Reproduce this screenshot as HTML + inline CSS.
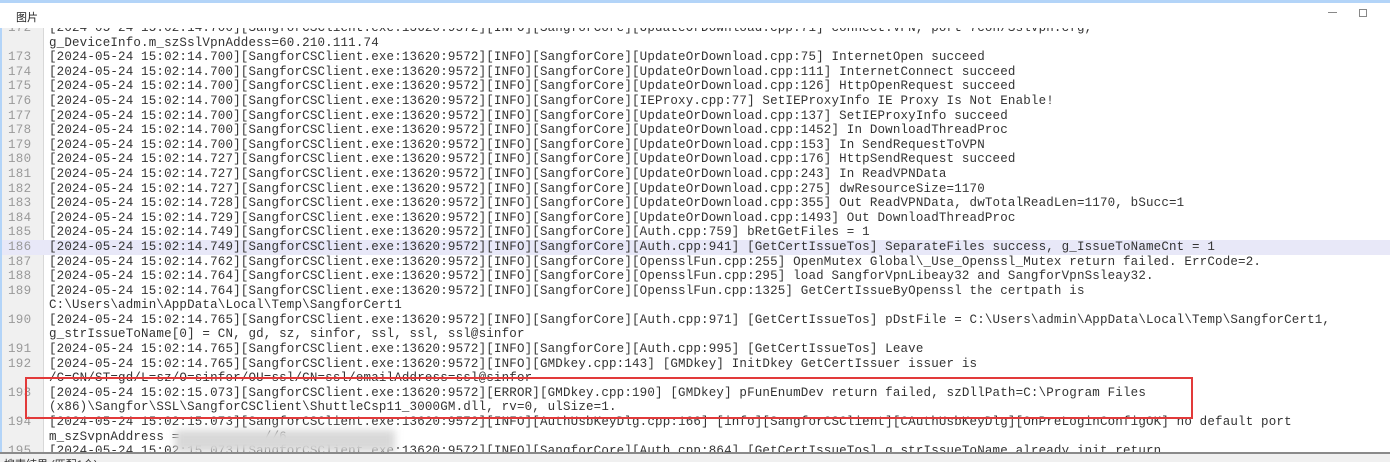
<!DOCTYPE html>
<html><head><meta charset="utf-8"><style>
*{margin:0;padding:0;box-sizing:border-box}
body{width:1390px;height:462px;overflow:hidden;background:#fff;position:relative;font-family:"Liberation Sans","Noto Sans CJK SC",sans-serif}
.top{position:absolute;left:0;top:0;width:1390px;height:3px;background:#b3d4f8}
.title{position:absolute;left:16px;top:9px;font-size:11px;color:#222}
.min{position:absolute;left:1328px;top:12px;width:9px;height:1px;background:#888}
.max{position:absolute;left:1359px;top:9px;width:8px;height:8px;border:1px solid #888}
.edit{position:absolute;left:0;top:28px;width:1390px;height:424px;overflow:hidden;border-left:2px solid #b3d4f8}
.gut{position:absolute;left:0;top:0;width:42px;height:424px;background:#f0f0f0;border-right:1px solid #d8d8d8}
.lines{position:absolute;left:0;top:-7px;width:1390px;font-family:"Liberation Mono",monospace;font-size:12.5px;line-height:14.6px;color:#333}
.r{height:14.6px;white-space:pre;position:relative}
.n{position:absolute;left:6px;color:#999;letter-spacing:0.3px}
.t{position:absolute;left:47px;letter-spacing:0.17px}
.hl{background:#e8e8f8}
.box{position:absolute;left:25px;top:377px;width:1168px;height:42px;border:2px solid #e23a3a}
.blur{position:absolute;left:175px;top:430px;width:220px;height:22px;background:#d8d8d8;filter:blur(4px)}
.bline{position:absolute;left:0;top:452px;width:1390px;height:2px;background:#8a8a8a}
.status{position:absolute;left:0;top:454px;width:1390px;height:8px;background:#f0f0f0;font-size:11px;color:#333;overflow:hidden}
.status span{position:absolute;left:4px;top:2px}
</style></head><body>
<div class="top"></div>
<div class="title">图片</div>
<div class="min"></div><div class="max"></div>
<div class="edit">
<div class="gut"></div>
<div class="lines">
<div class="r"><span class="n">172</span><span class="t">[2024-05-24 15:02:14.700][SangforCSClient.exe:13620:9572][INFO][SangforCore][UpdateOrDownload.cpp:71] connect:VPN, port 7con/Sslvpn.cfg,</span></div>
<div class="r"><span class="t">g_DeviceInfo.m_szSslVpnAddess=60.210.111.74</span></div>
<div class="r"><span class="n">173</span><span class="t">[2024-05-24 15:02:14.700][SangforCSClient.exe:13620:9572][INFO][SangforCore][UpdateOrDownload.cpp:75] InternetOpen succeed</span></div>
<div class="r"><span class="n">174</span><span class="t">[2024-05-24 15:02:14.700][SangforCSClient.exe:13620:9572][INFO][SangforCore][UpdateOrDownload.cpp:111] InternetConnect succeed</span></div>
<div class="r"><span class="n">175</span><span class="t">[2024-05-24 15:02:14.700][SangforCSClient.exe:13620:9572][INFO][SangforCore][UpdateOrDownload.cpp:126] HttpOpenRequest succeed</span></div>
<div class="r"><span class="n">176</span><span class="t">[2024-05-24 15:02:14.700][SangforCSClient.exe:13620:9572][INFO][SangforCore][IEProxy.cpp:77] SetIEProxyInfo IE Proxy Is Not Enable!</span></div>
<div class="r"><span class="n">177</span><span class="t">[2024-05-24 15:02:14.700][SangforCSClient.exe:13620:9572][INFO][SangforCore][UpdateOrDownload.cpp:137] SetIEProxyInfo succeed</span></div>
<div class="r"><span class="n">178</span><span class="t">[2024-05-24 15:02:14.700][SangforCSClient.exe:13620:9572][INFO][SangforCore][UpdateOrDownload.cpp:1452] In DownloadThreadProc</span></div>
<div class="r"><span class="n">179</span><span class="t">[2024-05-24 15:02:14.700][SangforCSClient.exe:13620:9572][INFO][SangforCore][UpdateOrDownload.cpp:153] In SendRequestToVPN</span></div>
<div class="r"><span class="n">180</span><span class="t">[2024-05-24 15:02:14.727][SangforCSClient.exe:13620:9572][INFO][SangforCore][UpdateOrDownload.cpp:176] HttpSendRequest succeed</span></div>
<div class="r"><span class="n">181</span><span class="t">[2024-05-24 15:02:14.727][SangforCSClient.exe:13620:9572][INFO][SangforCore][UpdateOrDownload.cpp:243] In ReadVPNData</span></div>
<div class="r"><span class="n">182</span><span class="t">[2024-05-24 15:02:14.727][SangforCSClient.exe:13620:9572][INFO][SangforCore][UpdateOrDownload.cpp:275] dwResourceSize=1170</span></div>
<div class="r"><span class="n">183</span><span class="t">[2024-05-24 15:02:14.728][SangforCSClient.exe:13620:9572][INFO][SangforCore][UpdateOrDownload.cpp:355] Out ReadVPNData, dwTotalReadLen=1170, bSucc=1</span></div>
<div class="r"><span class="n">184</span><span class="t">[2024-05-24 15:02:14.729][SangforCSClient.exe:13620:9572][INFO][SangforCore][UpdateOrDownload.cpp:1493] Out DownloadThreadProc</span></div>
<div class="r"><span class="n">185</span><span class="t">[2024-05-24 15:02:14.749][SangforCSClient.exe:13620:9572][INFO][SangforCore][Auth.cpp:759] bRetGetFiles = 1</span></div>
<div class="r hl"><span class="n">186</span><span class="t">[2024-05-24 15:02:14.749][SangforCSClient.exe:13620:9572][INFO][SangforCore][Auth.cpp:941] [GetCertIssueTos] SeparateFiles success, g_IssueToNameCnt = 1</span></div>
<div class="r"><span class="n">187</span><span class="t">[2024-05-24 15:02:14.762][SangforCSClient.exe:13620:9572][INFO][SangforCore][OpensslFun.cpp:255] OpenMutex Global\_Use_Openssl_Mutex return failed. ErrCode=2.</span></div>
<div class="r"><span class="n">188</span><span class="t">[2024-05-24 15:02:14.764][SangforCSClient.exe:13620:9572][INFO][SangforCore][OpensslFun.cpp:295] load SangforVpnLibeay32 and SangforVpnSsleay32.</span></div>
<div class="r"><span class="n">189</span><span class="t">[2024-05-24 15:02:14.764][SangforCSClient.exe:13620:9572][INFO][SangforCore][OpensslFun.cpp:1325] GetCertIssueByOpenssl the certpath is</span></div>
<div class="r"><span class="t">C:\Users\admin\AppData\Local\Temp\SangforCert1</span></div>
<div class="r"><span class="n">190</span><span class="t">[2024-05-24 15:02:14.765][SangforCSClient.exe:13620:9572][INFO][SangforCore][Auth.cpp:971] [GetCertIssueTos] pDstFile = C:\Users\admin\AppData\Local\Temp\SangforCert1,</span></div>
<div class="r"><span class="t">g_strIssueToName[0] = CN, gd, sz, sinfor, ssl, ssl, ssl@sinfor</span></div>
<div class="r"><span class="n">191</span><span class="t">[2024-05-24 15:02:14.765][SangforCSClient.exe:13620:9572][INFO][SangforCore][Auth.cpp:995] [GetCertIssueTos] Leave</span></div>
<div class="r"><span class="n">192</span><span class="t">[2024-05-24 15:02:14.765][SangforCSClient.exe:13620:9572][INFO][GMDkey.cpp:143] [GMDkey] InitDkey GetCertIssuer issuer is</span></div>
<div class="r"><span class="t">/C=CN/ST=gd/L=sz/O=sinfor/OU=ssl/CN=ssl/emailAddress=ssl@sinfor</span></div>
<div class="r"><span class="n">193</span><span class="t">[2024-05-24 15:02:15.073][SangforCSClient.exe:13620:9572][ERROR][GMDkey.cpp:190] [GMDkey] pFunEnumDev return failed, szDllPath=C:\Program Files</span></div>
<div class="r"><span class="t">(x86)\Sangfor\SSL\SangforCSClient\ShuttleCsp11_3000GM.dll, rv=0, ulSize=1.</span></div>
<div class="r"><span class="n">194</span><span class="t">[2024-05-24 15:02:15.073][SangforCSClient.exe:13620:9572][INFO][AuthUsbKeyDlg.cpp:166] [info][SangforCSClient][CAuthUsbKeyDlg][OnPreLoginConfigOK] no default port</span></div>
<div class="r"><span class="t">m_szSvpnAddress =           //6</span></div>
<div class="r"><span class="n">195</span><span class="t">[2024-05-24 15:02:15.073][SangforCSClient.exe:13620:9572][INFO][SangforCore][Auth.cpp:864] [GetCertIssueTos] g_strIssueToName already init return</span></div>
</div>
</div>
<div class="box"></div>
<div class="blur"></div>
<div class="bline"></div>
<div class="status"><span>搜索结果 (匹配1个)</span></div>
</body></html>
